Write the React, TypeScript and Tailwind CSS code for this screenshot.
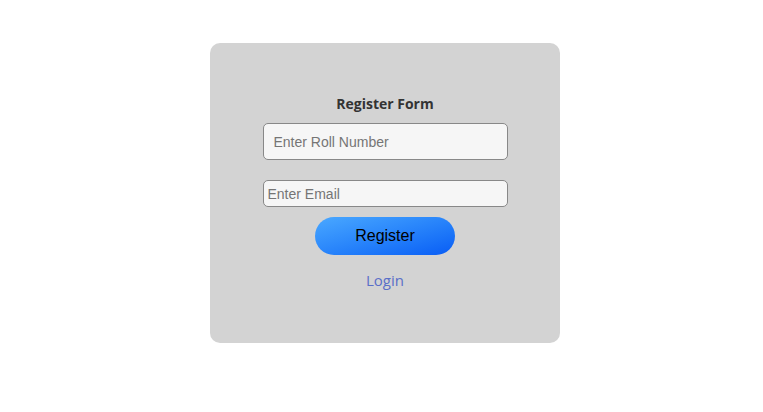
export default function App() {
  return (
    <div className="min-h-[412px] w-full bg-white flex justify-center pt-[43px] pl-[7px]">
      <div className="w-[350px] h-[300px] rounded-[10px] bg-[#d3d3d3] flex flex-col items-center pt-[51px]">
        <h2 className="text-[14px] leading-[20px] font-bold text-[#333] font-['Open_Sans','Noto_Sans',sans-serif]">
          Register Form
        </h2>
        <input
          type="text"
          placeholder="Enter Roll Number"
          className="mt-[9px] w-[245px] h-[37px] rounded-[5px] border border-[#888] bg-[#f6f6f6] px-[10px] text-[14px] font-['Liberation_Sans',Arial,sans-serif] placeholder:text-[#757575] outline-none"
        />
        <input
          type="email"
          placeholder="Enter Email"
          className="mt-[20px] w-[245px] h-[27px] rounded-[5px] border border-[#888] bg-[#f6f6f6] px-[4px] text-[14px] font-['Liberation_Sans',Arial,sans-serif] placeholder:text-[#757575] outline-none"
        />
        <button className="mt-[10px] w-[140px] h-[38px] rounded-full bg-gradient-to-br from-[#4aa8ff] to-[#0a5cf5] text-black text-[16px] font-['Liberation_Sans',Arial,sans-serif]">
          Register
        </button>
        <a className="mt-[15px] text-[15px] leading-[20px] text-[#5a6fc8] font-['Open_Sans','Noto_Sans',sans-serif] cursor-pointer">
          Login
        </a>
      </div>
    </div>
  );
}
